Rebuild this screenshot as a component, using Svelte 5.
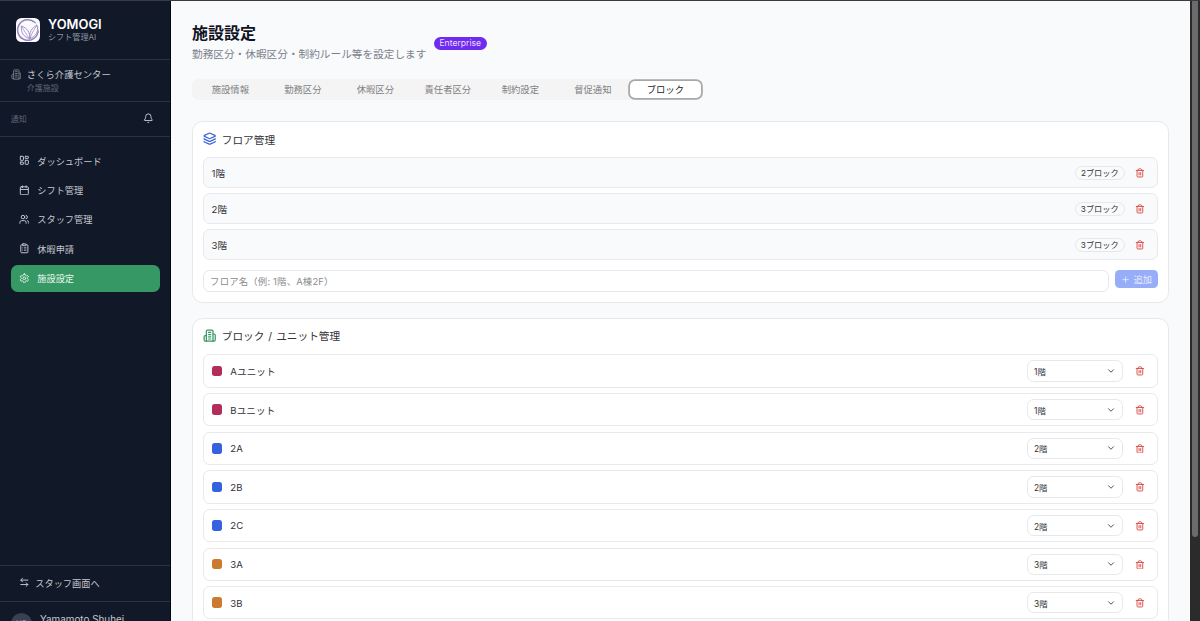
<script lang="ts">
  interface Floor {
    name: string;
    blocks: number;
  }

  interface Block {
    name: string;
    floor: string;
    color: string;
  }

  const navItems = [
    { icon: 'dashboard', label: 'ダッシュボード' },
    { icon: 'calendar', label: 'シフト管理' },
    { icon: 'users', label: 'スタッフ管理' },
    { icon: 'clipboard', label: '休暇申請' },
    { icon: 'settings', label: '施設設定' },
  ];

  const tabs = ['施設情報', '勤務区分', '休暇区分', '責任者区分', '制約設定', '督促通知', 'ブロック'];

  const floors: Floor[] = [
    { name: '1階', blocks: 2 },
    { name: '2階', blocks: 3 },
    { name: '3階', blocks: 3 },
  ];

  const blocks: Block[] = [
    { name: 'Aユニット', floor: '1階', color: '#b32d59' },
    { name: 'Bユニット', floor: '1階', color: '#b32d59' },
    { name: '2A', floor: '2階', color: '#3563e0' },
    { name: '2B', floor: '2階', color: '#3563e0' },
    { name: '2C', floor: '2階', color: '#3563e0' },
    { name: '3A', floor: '3階', color: '#cc7a30' },
    { name: '3B', floor: '3階', color: '#cc7a30' },
  ];

  let activeNav = $state('施設設定');
  let activeTab = $state('ブロック');
  let floorName = $state('');
</script>

{#snippet icon(name: string)}
  <svg class="icon" viewBox="0 0 24 24" fill="none" stroke="currentColor" stroke-width="2.2" stroke-linecap="round" stroke-linejoin="round">
    {#if name === 'dashboard'}
      <rect x="3" y="3" width="7" height="9" rx="1" />
      <rect x="14" y="3" width="7" height="5" rx="1" />
      <rect x="14" y="12" width="7" height="9" rx="1" />
      <rect x="3" y="16" width="7" height="5" rx="1" />
    {:else if name === 'calendar'}
      <path d="M8 2v4M16 2v4M3 10h18" />
      <rect x="3" y="4" width="18" height="18" rx="2" />
    {:else if name === 'users'}
      <path d="M16 21v-2a4 4 0 0 0-4-4H6a4 4 0 0 0-4 4v2" />
      <circle cx="9" cy="7" r="4" />
      <path d="M22 21v-2a4 4 0 0 0-3-3.87M16 3.13a4 4 0 0 1 0 7.75" />
    {:else if name === 'clipboard'}
      <rect x="8" y="2" width="8" height="4" rx="1" />
      <path d="M16 4h2a2 2 0 0 1 2 2v14a2 2 0 0 1-2 2H6a2 2 0 0 1-2-2V6a2 2 0 0 1 2-2h2" />
      <path d="M12 11h4M12 16h4M8 11h.01M8 16h.01" />
    {:else if name === 'settings'}
      <path d="M12.22 2h-.44a2 2 0 0 0-2 2v.18a2 2 0 0 1-1 1.73l-.43.25a2 2 0 0 1-2 0l-.15-.08a2 2 0 0 0-2.73.73l-.22.38a2 2 0 0 0 .73 2.73l.15.1a2 2 0 0 1 1 1.72v.51a2 2 0 0 1-1 1.74l-.15.09a2 2 0 0 0-.73 2.73l.22.38a2 2 0 0 0 2.73.73l.15-.08a2 2 0 0 1 2 0l.43.25a2 2 0 0 1 1 1.73V20a2 2 0 0 0 2 2h.44a2 2 0 0 0 2-2v-.18a2 2 0 0 1 1-1.73l.43-.25a2 2 0 0 1 2 0l.15.08a2 2 0 0 0 2.73-.73l.22-.39a2 2 0 0 0-.73-2.73l-.15-.08a2 2 0 0 1-1-1.74v-.5a2 2 0 0 1 1-1.74l.15-.09a2 2 0 0 0 .73-2.73l-.22-.38a2 2 0 0 0-2.73-.73l-.15.08a2 2 0 0 1-2 0l-.43-.25a2 2 0 0 1-1-1.73V4a2 2 0 0 0-2-2z" />
      <circle cx="12" cy="12" r="3" />
    {:else if name === 'building'}
      <path d="M6 22V4a2 2 0 0 1 2-2h8a2 2 0 0 1 2 2v18Z" />
      <path d="M6 12H4a2 2 0 0 0-2 2v6a2 2 0 0 0 2 2h2M18 9h2a2 2 0 0 1 2 2v9a2 2 0 0 1-2 2h-2" />
      <path d="M10 6h4M10 10h4M10 14h4M10 18h4" />
    {:else if name === 'bell'}
      <path d="M10.27 21a2 2 0 0 0 3.46 0" />
      <path d="M3.26 15.33A1 1 0 0 0 4 17h16a1 1 0 0 0 .74-1.67C19.41 13.96 18 12.5 18 8A6 6 0 0 0 6 8c0 4.5-1.41 5.96-2.74 7.33" />
    {:else if name === 'swap'}
      <path d="M8 3 4 7l4 4M4 7h16M16 21l4-4-4-4M20 17H4" />
    {:else if name === 'layers'}
      <path d="M12.83 2.18a2 2 0 0 0-1.66 0L2.6 6.08a1 1 0 0 0 0 1.83l8.58 3.91a2 2 0 0 0 1.66 0l8.58-3.9a1 1 0 0 0 0-1.83z" />
      <path d="M2 12a1 1 0 0 0 .58.91l8.6 3.91a2 2 0 0 0 1.65 0l8.58-3.9A1 1 0 0 0 22 12" />
      <path d="M2 17a1 1 0 0 0 .58.91l8.6 3.91a2 2 0 0 0 1.65 0l8.58-3.9A1 1 0 0 0 22 17" />
    {:else if name === 'trash'}
      <path d="M3 6h18M19 6v14a2 2 0 0 1-2 2H7a2 2 0 0 1-2-2V6M8 6V4a2 2 0 0 1 2-2h4a2 2 0 0 1 2 2v2M10 11v6M14 11v6" />
    {:else if name === 'plus'}
      <path d="M5 12h14M12 5v14" />
    {:else if name === 'chevron'}
      <path d="m6 9 6 6 6-6" />
    {/if}
  </svg>
{/snippet}

<div class="app">
  <aside class="sidebar">
    <div class="brand">
      <svg class="logo" viewBox="0 0 24 24" fill="none">
        <rect width="24" height="24" rx="5.5" fill="#fbfafd" />
        <path d="M19 4.500A10.300 10.300 0 1 0 22.200 13" stroke="#9684be" stroke-width="1.5" stroke-linecap="round" />
        <path d="M19 4.500A10.300 10.300 0 0 1 22.200 13" stroke="#c9bee0" stroke-width=".8" />
        <path d="M13.500 20.500C7.500 19 4.500 14 5.500 8C11 10 14.500 14.500 13.500 20.500Z" stroke="#9b8ac2" stroke-width=".9" />
        <path d="M14 20.500C13 15 15.500 9.500 21 7.500C23 13 20 18.500 14 20.500Z" stroke="#9b8ac2" stroke-width=".9" />
        <path d="M5.500 8C8 13 10.500 16 13.800 21.500M21 7.500C17.500 12 15.500 16 14 20.500" stroke="#9b8ac2" stroke-width=".7" />
      </svg>
      <div>
        <div class="brand-name">YOMOGI</div>
        <div class="brand-sub">シフト管理AI</div>
      </div>
    </div>

    <div class="facility">
      {@render icon('building')}
      <div>
        <div class="facility-name">さくら介護センター</div>
        <div class="facility-type">介護施設</div>
      </div>
    </div>

    <div class="notice">
      <span>通知</span>
      {@render icon('bell')}
    </div>

    <nav>
      {#each navItems as item}
        <button class="nav-item" class:active={activeNav === item.label} onclick={() => (activeNav = item.label)}>
          {@render icon(item.icon)}
          <span>{item.label}</span>
        </button>
      {/each}
    </nav>

    <div class="switch">
      {@render icon('swap')}
      <span>スタッフ画面へ</span>
    </div>
    <div class="user">
      <div class="avatar">YS</div>
      <div class="user-name">Yamamoto Shuhei</div>
    </div>
  </aside>

  <main>
    <header>
      <div>
        <h1>施設設定</h1>
        <p>勤務区分・休暇区分・制約ルール等を設定します</p>
      </div>
      <span class="plan">Enterprise</span>
    </header>

    <div class="tabs">
      {#each tabs as tab}
        <button class="tab" class:active={activeTab === tab} onclick={() => (activeTab = tab)}>{tab}</button>
      {/each}
    </div>

    <section class="card">
      <h2 class="blue">{@render icon('layers')}<span>フロア管理</span></h2>
      <div class="list">
        {#each floors as floor}
          <div class="floor-row">
            <span class="name">{floor.name}</span>
            <span class="count">{floor.blocks}ブロック</span>
            <button class="delete" aria-label="削除">{@render icon('trash')}</button>
          </div>
        {/each}
      </div>
      <div class="add-row">
        <input bind:value={floorName} placeholder="フロア名（例: 1階、A棟2F）" />
        <button class="add" disabled={!floorName}>{@render icon('plus')}<span>追加</span></button>
      </div>
    </section>

    <section class="card">
      <h2 class="green">{@render icon('building')}<span>ブロック / ユニット管理</span></h2>
      <div class="list">
        {#each blocks as block}
          <div class="block-row">
            <span class="swatch" style:background={block.color}></span>
            <span class="name">{block.name}</span>
            <button class="select"><span>{block.floor}</span>{@render icon('chevron')}</button>
            <button class="delete" aria-label="削除">{@render icon('trash')}</button>
          </div>
        {/each}
      </div>
    </section>
  </main>

  <div class="scrollbar"><div class="thumb"></div></div>
</div>

<style>
  :global(body) {
    overflow: hidden;
  }

  .app {
    box-sizing: border-box;
    display: flex;
    width: 1200px;
    height: 621px;
    overflow: hidden;
    border-top: 1px solid #3b3a42;
    background: #f9fafc;
    color: #333338;
    font-family: Inter, 'Noto Sans CJK JP', sans-serif;
    font-size: 9.2px;
  }

  .app :global(*) {
    box-sizing: border-box;
  }

  button,
  input {
    margin: 0;
    padding: 0;
    border: 0;
    background: none;
    color: inherit;
    font: inherit;
  }

  .icon {
    display: block;
    flex: none;
    width: 10.67px;
    height: 10.67px;
  }

  /* Sidebar */
  .sidebar {
    display: flex;
    flex: none;
    flex-direction: column;
    width: 171px;
    height: 646px;
    border-right: 1px solid #05070f;
    background: #111827;
    color: #c3c8d1;
  }

  .brand {
    display: flex;
    flex: none;
    align-items: center;
    gap: 8px;
    height: 59px;
    padding: 0 16px;
    border-bottom: 1px solid #2b3341;
  }

  .logo {
    width: 24px;
    height: 24px;
  }

  .brand-name {
    color: #fff;
    font-size: 12.9px;
    font-weight: 600;
    line-height: 15px;
  }

  .brand-sub {
    color: #8d939f;
    font-size: 8.1px;
    line-height: 11px;
  }

  .facility {
    display: flex;
    flex: none;
    gap: 5.5px;
    height: 42px;
    padding: 8px 10.67px 0;
    border-bottom: 1px solid #2b3341;
  }

  .facility .icon {
    margin-top: 1px;
    color: #747b88;
  }

  .facility-name {
    font-size: 9.33px;
    line-height: 13.5px;
  }

  .facility-type {
    color: #5e6673;
    font-size: 8px;
    line-height: 12px;
  }

  .notice {
    display: flex;
    flex: none;
    align-items: center;
    justify-content: space-between;
    height: 35px;
    padding: 0 16.5px 1px 10.67px;
    border-bottom: 1px solid #2b3341;
    color: #5e6673;
    font-size: 8px;
  }

  .notice .icon {
    color: #c3c8d1;
  }

  nav {
    display: flex;
    flex: 1;
    flex-direction: column;
    gap: 2.67px;
    padding: 10.67px 10px 10.67px 10.67px;
  }

  .nav-item {
    display: flex;
    align-items: center;
    gap: 8px;
    height: 26.67px;
    padding: 0 8px 0.4px;
    border-radius: 6.67px;
    text-align: left;
  }

  .nav-item.active {
    background: #369965;
    color: #e6f5ec;
  }

  .switch {
    display: flex;
    flex: none;
    align-items: center;
    gap: 6px;
    height: 35.5px;
    padding: 0 18.67px 1px;
    border-top: 1px solid #2b3341;
  }

  .user {
    display: flex;
    flex: none;
    gap: 8px;
    height: 46.5px;
    padding: 11px 10.67px 0;
    border-top: 1px solid #2b3341;
  }

  .avatar {
    display: grid;
    place-items: center;
    width: 21.33px;
    height: 21.33px;
    border-radius: 50%;
    background: #374151;
    color: #8d939f;
    font-size: 8px;
  }

  .user-name {
    font-size: 9.9px;
    line-height: 12px;
  }

  /* Main area */
  main {
    flex: 1;
    min-width: 0;
    padding: 22px 21px 0 20.6px;
  }

  header {
    display: flex;
    align-items: center;
    gap: 7.5px;
  }

  h1 {
    margin: 0;
    padding-left: 0.4px;
    color: #111425;
    font-size: 16px;
    font-weight: 700;
    line-height: 21px;
  }

  p {
    margin: 0;
    padding-left: 0.4px;
    color: #7b818c;
    font-size: 10.67px;
    line-height: 22px;
  }

  .plan {
    height: 13px;
    margin-top: -3px;
    padding: 0 5.5px;
    border-radius: 7px;
    background: #6f2cf0;
    color: #e9defd;
    font-size: 8.6px;
    line-height: 13px;
  }

  .tabs {
    display: grid;
    grid-template-columns: repeat(7, 72.5px);
    width: max-content;
    height: 21px;
    margin-top: 13px;
    padding: 2px;
    border-radius: 6.67px;
    background: #f4f4f5;
    color: #7f7f83;
    font-size: 9.33px;
  }

  .tab {
    padding-left: 1px;
    border-radius: 5px;
    line-height: 16px;
  }

  .tab.active {
    height: 16.5px;
    margin-left: 1px;
    padding: 1px 0 0;
    background: #fff;
    box-shadow: 0 0 0 1.8px #a8a8a8;
    color: #222;
  }

  .card {
    margin-bottom: 15px;
    padding: 9px 10px 10px 10.5px;
    border: 1px solid #e6e8ec;
    border-radius: 10.67px;
    background: #fff;
  }

  .tabs + .card {
    margin-top: 21px;
  }

  h2 {
    display: flex;
    align-items: center;
    gap: 5.33px;
    height: 16px;
    margin: 0 0 10.3px;
    font-size: 10.67px;
    font-weight: 400;
    word-spacing: 1px;
  }

  h2 .icon {
    width: 13.33px;
    height: 13.33px;
  }

  .blue .icon {
    color: #3d62d8;
  }

  .green .icon {
    color: #369965;
  }

  .list {
    display: flex;
    flex-direction: column;
    gap: 5.33px;
  }

  .floor-row,
  .block-row {
    display: flex;
    align-items: center;
    height: 30.67px;
    padding: 0 8px 0 7.5px;
    border: 1px solid #e7e9ed;
    border-radius: 6.67px;
    background: #f9fafb;
  }

  .block-row {
    height: 33.33px;
    background: #fff;
  }

  .name {
    flex: 1;
    padding-top: 0.5px;
    font-size: 9.6px;
    letter-spacing: 0.1px;
  }

  .count {
    height: 14px;
    padding: 0 5px;
    border: 1px solid #e7e8eb;
    border-radius: 7px;
    font-size: 8.2px;
    line-height: 12.5px;
  }

  .delete {
    display: grid;
    place-items: center;
    width: 19px;
    height: 19px;
    margin-left: 5.33px;
    padding-top: 0.7px;
    color: #d9453f;
  }

  .delete .icon {
    width: 9.8px;
    height: 9.8px;
  }

  .add-row {
    display: flex;
    align-items: center;
    gap: 6px;
    margin-top: 10px;
  }

  input {
    flex: 1;
    height: 22px;
    padding: 1px 6px 0;
    border: 1px solid #e7e8eb;
    border-radius: 6.67px;
    outline: 0;
    font-size: 9.4px;
    letter-spacing: 0.18px;
  }

  input::placeholder {
    color: #8b8b8f;
    opacity: 1;
  }

  .add {
    display: flex;
    align-items: center;
    gap: 3px;
    height: 18px;
    margin-top: -3px;
    padding: 0 6px;
    border-radius: 4.5px;
    background: #97adf8;
    color: #e6ecfe;
  }

  .add .icon {
    width: 9.33px;
    height: 9.33px;
  }

  .swatch {
    width: 10.67px;
    height: 10.67px;
    margin-right: 8px;
    border-radius: 2.67px;
  }

  .select {
    display: flex;
    align-items: center;
    justify-content: space-between;
    width: 96px;
    height: 21.33px;
    padding: 0 6px;
    border: 1px solid #e7e8eb;
    border-radius: 6.67px;
    font-size: 8.4px;
  }

  .select .icon {
    width: 10px;
    height: 10px;
    color: #444;
  }

  .block-row .delete {
    margin-left: 7px;
  }

  .scrollbar {
    width: 10px;
    padding: 0 2px;
    background: #2b2b2b;
  }

  .thumb {
    height: 536px;
    border-radius: 0 0 3px 3px;
    background: #6b6b6b;
  }
</style>
